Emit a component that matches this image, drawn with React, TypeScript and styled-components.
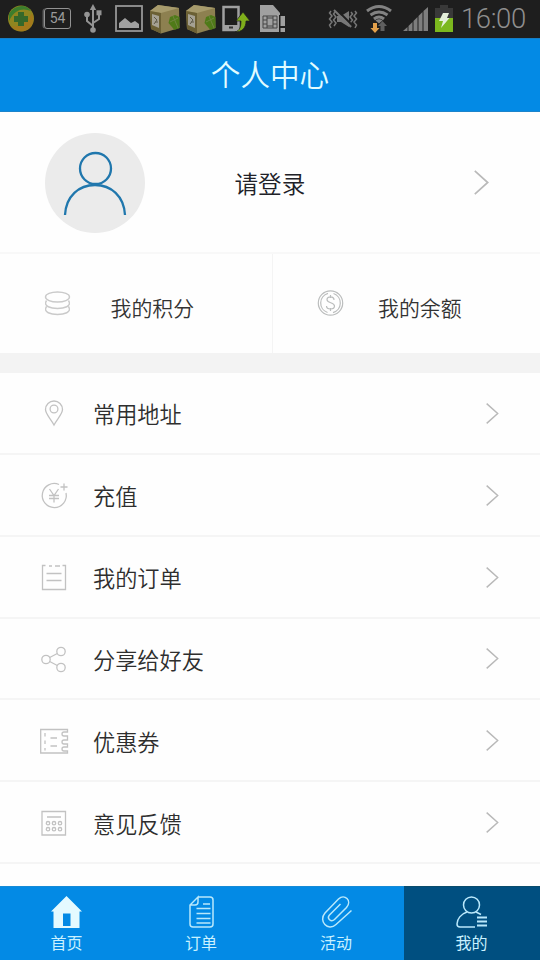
import React from 'react';
import styled, { createGlobalStyle } from 'styled-components';

const GlobalStyle = createGlobalStyle`
  * { box-sizing: border-box; }
  body { margin: 0; background: #fefefe; font-family: "Noto Sans CJK SC", sans-serif; }
  svg { display: block; overflow: visible; flex: none; }
`;

const Screen = styled.div`
  width: 540px;
  height: 960px;
  display: flex;
  flex-direction: column;
  background: #fefefe;
  overflow: hidden;
`;

const StatusBar = styled.div`
  height: 38px;
  flex: none;
  background: #1e1e1e;
  display: flex;
  align-items: center;
  justify-content: space-between;
  padding: 0 13px 1px 8px;
`;

const StatusGroup = styled.div`
  display: flex;
  align-items: center;
`;

const StatusItem = styled.div<{ $gap: number }>`
  margin-left: ${(p) => p.$gap}px;
`;

const BatteryLevel = styled.div`
  width: 27px;
  height: 21px;
  border: 1.5px solid #929292;
  border-radius: 3px;
  box-shadow: -2px 0 0 -0.5px #5a5a5a;
  color: #9a9a9a;
  font: 14px/19px Roboto, sans-serif;
  text-align: center;
`;

const Clock = styled.div`
  margin-left: 8px;
  width: 66px;
  color: #8f8f8f;
  font: 350 27.5px/34px Roboto, sans-serif;
  letter-spacing: -0.4px;
  white-space: nowrap;
`;

const TitleBar = styled.header`
  height: 74px;
  flex: none;
  display: flex;
  align-items: center;
  justify-content: center;
  padding-bottom: 2px;
  background: #038ae5;
  border-top: 1px solid #167dc4;
  border-bottom: 1px solid #1c84cb;
`;

const Title = styled.h1`
  margin: 0;
  color: #e2fcff;
  font-size: 29.6px;
  line-height: 44px;
  font-weight: 350;
`;

const Profile = styled.section`
  height: 142px;
  flex: none;
  display: flex;
  align-items: center;
  padding: 1px 51px 0 45px;
  border-bottom: 2px solid #f8f8f8;
`;

const Avatar = styled.div`
  width: 100px;
  height: 100px;
  border-radius: 50%;
  background: #ebebeb;
`;

const LoginText = styled.div`
  flex: 1;
  margin-left: 89.5px;
  color: #202127;
  font-size: 23.6px;
  line-height: 36px;
  font-weight: 350;
`;

const Stats = styled.section`
  height: 99px;
  flex: none;
  display: grid;
  grid-template-columns: 273px 1fr;
`;

const Stat = styled.div<{ $left: number; $gap: number; $divided?: boolean }>`
  display: flex;
  align-items: center;
  gap: ${(p) => p.$gap}px;
  padding-left: ${(p) => p.$left}px;
  padding-bottom: 2px;
  border-right: ${(p) => (p.$divided ? '1px solid #f4f4f4' : '0')};
`;

const StatLabel = styled.span`
  padding-top: 8px;
  color: #333;
  font-size: 20.9px;
  line-height: 32px;
  font-weight: 350;
`;

const Spacer = styled.div`
  height: 20px;
  flex: none;
  background: #f3f3f3;
`;

const Menu = styled.ul`
  margin: 0;
  padding: 0;
  height: 491px;
  flex: none;
  display: grid;
  grid-template-rows: repeat(6, 1fr);
  list-style: none;
`;

const MenuItem = styled.li`
  display: flex;
  align-items: center;
  padding: 1px 41px 0 40px;
  border-bottom: 2px solid #f5f5f5;
`;

const MenuLabel = styled.span`
  flex: 1;
  margin-left: 25px;
  color: #2e2e2e;
  font-size: 22.2px;
  line-height: 34px;
  font-weight: 350;
`;

const TabBar = styled.nav`
  height: 74px;
  flex: none;
  margin-top: auto;
  display: grid;
  grid-template-columns: 134px 135px 135px 136px;
  background: #038ae5;
`;

const Tab = styled.div<{ $active?: boolean }>`
  display: flex;
  flex-direction: column;
  align-items: center;
  padding: 9px 1px 0 0;
  background: ${(p) => (p.$active ? '#004f80' : 'transparent')};
  border-top: 1px solid ${(p) => (p.$active ? '#0a4c6c' : '#168bd6')};
`;

const TabLabel = styled.span`
  margin-top: 2px;
  color: #c9f1ff;
  font-size: 16px;
  line-height: 24px;
`;

const Chevron = ({ size }: { size: number }) => (
  <svg width={size * 0.55} height={size} viewBox="0 0 13.2 24" fill="none" stroke="#b9b9b9" strokeWidth="1.5">
    <path d="M0.7 1.700 12.200 12 0.7 22.300" />
  </svg>
);

const SafetyBadge = () => (
  <svg width="26" height="27" viewBox="0 0 26 27">
    <circle cx="13" cy="13.5" r="13" fill="#8f8620" />
    <path d="M1 9C6 0 18-2 23 6C15 3 7 4 1 16Z" fill="#3c7d2c" />
    <path d="M3 21C11 23 20 17 24 8C30 25 12 32 3 21Z" fill="#a3791b" />
    <path d="M10 7h6v4h4v6h-4v4h-6v-4H6v-6h4Z" fill="#35682a" />
  </svg>
);

const UsbIcon = () => (
  <svg width="18" height="29" viewBox="0 0 18 29" fill="none" stroke="#949494" strokeWidth="2">
    <path d="M9 4v22M9 22 3 17v-6M9 19l6-4V9" />
    <path d="m9 0 3.2 6H5.8Z" fill="#949494" stroke="none" />
    <circle cx="9" cy="26" r="2.8" fill="#949494" stroke="none" />
    <circle cx="3" cy="10.5" r="2.8" fill="#949494" stroke="none" />
    <path d="M12.5 6.3h5v5h-5Z" fill="#949494" stroke="none" />
  </svg>
);

const PictureIcon = () => (
  <svg width="28" height="27" viewBox="0 0 28 27">
    <rect x="1" y="1" width="26" height="25" fill="none" stroke="#969696" strokeWidth="1.8" />
    <path d="M4 23v-5l6-5 6 5 4-2 4 3v4Z" fill="#a0a0a0" />
  </svg>
);

const PackageIcon = () => (
  <svg width="30" height="30" viewBox="0 0 30 30">
    <path d="m0 7 8-6 21 3 .5 20L11 29.500 1 25Z" fill="#8d8050" />
    <path d="m0 7 8-6 21 3-18 5Z" fill="#a79b6c" />
    <path d="m0 7 11 2v20.500L1 25Z" fill="#6b6034" />
    <path d="m2 10 7 2v12l-7-3Z" fill="#a5a193" />
    <path d="m4 13 3 3-3 4m1-2h3" fill="none" stroke="#5c5847" />
    <path d="m20 13 5-2 4.500 2v11l-5 2-6-7Z" fill="#4f7a18" />
    <path d="m23 12 5 12m-8-6 8-4" stroke="#6f8540" />
  </svg>
);

const PhoneTransferIcon = () => (
  <svg width="28" height="28" viewBox="0 0 28 28">
    <path d="M1.5 2h15v23h-15Z" fill="none" stroke="#a0a0a0" strokeWidth="2.5" />
    <path d="M1 20h16v5H1Z" fill="#a0a0a0" />
    <path d="M7 22.500h4" stroke="#333" strokeWidth="2" />
    <path d="M13 27c5-1 6-6 6-11h-5l7-9 7 9h-4c0 7-4 11-11 11Z" fill="#7fae1b" stroke="#1e1e1e" strokeWidth=".7" />
  </svg>
);

const SimIcon = () => (
  <svg width="27" height="29" viewBox="0 0 27 29">
    <path d="M1 1h13l7 8v19H1Z" fill="#a0a0a0" />
    <path d="M4 12h14v12H4ZM8 12v12m6-12v12M4 16h4m6 0h4M4 20h4m6 0h4M8 14h6m-6 8h6" fill="none" stroke="#444" strokeWidth="1" />
    <path d="M20 11h6v18h-6Z" fill="#1e1e1e" />
    <path d="M21.5 12H26v10h-4.5Zm0 12H26v4h-4.5Z" fill="#a0a0a0" />
  </svg>
);

const VibrateIcon = () => (
  <svg width="28" height="20" viewBox="0 0 28 20" fill="none" stroke="#777" strokeWidth="1.5">
    <path d="m2 2-1.5 2L3 7 .5 10 3 13 .5 16 2 19M6 3 4.5 5 7 8l-2.5 3L7 14l-2 3M26 2l1.5 2L25 7l2.5 3-2.5 3 2.5 3-1.5 3M22 3l1.5 2L21 8l2.5 3-2.5 3 2 3" />
    <path d="M8 7h4l8-5v16l-8-5H8Z" fill="#777" stroke="none" />
    <path d="m7 0 17 17" stroke="#1e1e1e" strokeWidth="2" />
    <path d="m5 1 17 17" strokeWidth="2" />
  </svg>
);

const WifiIcon = () => (
  <svg width="26" height="28" viewBox="0 0 26 28" fill="none" stroke="#828282" strokeWidth="3">
    <path d="M1 6Q13-3 25 6M4.5 10Q13 4 21.5 10M8 14q5-4 10 0" />
    <path d="m9.500 15.500 3.500 3 3.500-3q-3.500-2.500-7 0Z" fill="#828282" stroke="none" />
    <path d="M7 18h4v5h2.500L9 28l-4.500-5H7Z" fill="#e3a04b" stroke="none" />
    <path d="M14.500 26v-5H12l4.500-5 4.500 5h-2.500v5Z" fill="#606060" stroke="none" />
  </svg>
);

const SignalIcon = () => (
  <svg width="25" height="24" viewBox="0 0 25 24" fill="#7e7e7e">
    <path d="m0 24 4.500-4v4Zm5.500 0v-5L9.500 15v9Zm5 0V14l4-4v14Zm5 0V9l4-4v19Zm5 0V4L25 0v24Z" />
  </svg>
);

const ChargeIcon = () => (
  <svg width="18" height="27" viewBox="0 0 18 27">
    <path d="M5 0h8v3h5v10H0V3h5Z" fill="#393939" />
    <path d="M0 13h18v14H0Z" fill="#7cb81e" />
    <path d="M8 8h6l-2 5h2.500L6 23l2-7H4Z" fill="#e4efda" />
  </svg>
);

const PersonIcon = () => (
  <svg width="100" height="100" viewBox="0 0 100 100" fill="none" stroke="#2077ad" strokeWidth="2.3">
    <circle cx="50.500" cy="35.500" r="15.500" />
    <path d="M20 82C21 63 34 52 50 52S79 63 80 82" />
  </svg>
);

const CoinsIcon = () => (
  <svg width="26" height="24" viewBox="0 0 26 24" fill="none" stroke="#cacaca" strokeWidth="1.4">
    <ellipse cx="13.500" cy="6" rx="12" ry="5" />
    <path d="M2.500 9.500c-4 6 5 8 11 8s15-2 11-8M2.500 15.500c-4 6 5 8 11 8s15-2 11-8" />
  </svg>
);

const DollarIcon = () => (
  <svg width="26" height="26" viewBox="0 0 26 26" fill="none" stroke="#bbbdbd" strokeWidth="1.2">
    <circle cx="12.500" cy="13" r="12.200" />
    <path d="M10 3.400A10 10 0 0 0 9.500 22.500M15 22.600A10 10 0 0 0 15.500 3.500" />
    <path d="M16 10c0-4-7-4-7-.5 0 4 7.500 2.500 7.500 6.500 0 4-8 4-8 0M12.500 5v3m0 10v3" />
  </svg>
);

const icons: Record<string, React.ReactNode> = {
  address: (
    <>
      <path d="M14 26C11 20 5.500 15 5.500 10.500a8.500 8.500 0 0 1 17 0C22.500 15 17 20 14 26Z" />
      <circle cx="14" cy="10" r="3.900" />
    </>
  ),
  recharge: (
    <path d="M19 3.500A12 12 0 1 0 26 12M20.500 6h7M24 2.500v7M9.500 8l4.500 6.500L18.500 8M14 14v7.500M9 14.500h10M9 17.500h10" />
  ),
  order: <path d="M5.500 2.500H2.500v24h23v-24h-3M9 3h3m3 0h5M6.500 10.500h15M6.500 17.500h15" />,
  share: (
    <>
      <circle cx="6" cy="14.500" r="4.200" />
      <circle cx="21" cy="6.500" r="4.200" />
      <circle cx="21" cy="22.500" r="4.200" />
      <path d="M9.700 12.500 17.300 8.500M9.700 16.500l7.600 4" />
    </>
  ),
  coupon: (
    <path d="M27.500 5V2.500H.7v23.500h26.800v-2h-3.500a2 2 0 0 1 0-4h3.500v-3h-3.500a2 2 0 0 1 0-4h3.500V9h-3.500a2 2 0 0 1 0-4ZM5 6v3.500m0 4V17m0 4v2.500M10.500 11H17M10.500 19H17" />
  ),
  feedback: (
    <>
      <path d="M2 2.500h23.500v23.500H2ZM7 8h14" />
      {[8, 14, 20].map((x) => (
        <React.Fragment key={x}>
          <circle cx={x} cy="14.200" r="1.700" />
          <circle cx={x} cy="20.200" r="1.700" />
        </React.Fragment>
      ))}
    </>
  ),
};

const LineIcon = ({ name }: { name: string }) => (
  <svg width="28" height="28" viewBox="0 0 28 28" fill="none" stroke="#c2c2c2" strokeWidth="1.3">
    {icons[name]}
  </svg>
);

const menu = [
  { icon: 'address', label: '常用地址' },
  { icon: 'recharge', label: '充值' },
  { icon: 'order', label: '我的订单' },
  { icon: 'share', label: '分享给好友' },
  { icon: 'coupon', label: '优惠券' },
  { icon: 'feedback', label: '意见反馈' },
];

const tabs = [
  {
    label: '首页',
    icon: (
      <path
        d="M15.500 0 31 15.500h-2.500V32h-26V15.500H0ZM12 17.500v12.500h7.500V17.500Z"
        fill="#e4faff"
        fillRule="evenodd"
        stroke="none"
      />
    ),
  },
  {
    label: '订单',
    icon: (
      <path d="M12 1h12q3 0 3 3v24q0 3-3 3H7q-3 0-3-3V9l8-8v5q0 3-3 3H4M17 8H24M10.500 12.500h14M10.500 17.500h14M10.500 22.500h14M10.500 27h14" />
    ),
  },
  {
    label: '活动',
    icon: (
      <path d="M19.500 8 8.500 19c-3 3.500 1.500 7.500 5 4.500L25.500 11.500c6-7-2-14-8-8.500L4 17C-3 25 7 36 15 28.500L30.500 14.500" />
    ),
  },
  {
    label: '我的',
    active: true,
    icon: (
      <>
        <circle cx="15.500" cy="9" r="8" />
        <path d="M11 16C5 18 1 23 1 28q0 3 3 3h15M20 16l5 2.500" />
        <path d="M21 21.500h10M21 25.500h10M21 29.500h10" strokeWidth="1.800" />
      </>
    ),
  },
];

export default function App() {
  return (
    <Screen>
      <GlobalStyle />
      <StatusBar>
        <StatusGroup>
          <StatusItem $gap={0}><SafetyBadge /></StatusItem>
          <StatusItem $gap={10}><BatteryLevel>54</BatteryLevel></StatusItem>
          <StatusItem $gap={13}><UsbIcon /></StatusItem>
          <StatusItem $gap={13}><PictureIcon /></StatusItem>
          <StatusItem $gap={7}><PackageIcon /></StatusItem>
          <StatusItem $gap={6}><PackageIcon /></StatusItem>
          <StatusItem $gap={6}><PhoneTransferIcon /></StatusItem>
          <StatusItem $gap={9}><SimIcon /></StatusItem>
        </StatusGroup>
        <StatusGroup>
          <VibrateIcon />
          <StatusItem $gap={9}><WifiIcon /></StatusItem>
          <StatusItem $gap={11}><SignalIcon /></StatusItem>
          <StatusItem $gap={7}><ChargeIcon /></StatusItem>
          <Clock>16:00</Clock>
        </StatusGroup>
      </StatusBar>
      <TitleBar><Title>个人中心</Title></TitleBar>
      <Profile>
        <Avatar><PersonIcon /></Avatar>
        <LoginText>请登录</LoginText>
        <Chevron size={27} />
      </Profile>
      <Stats>
        <Stat $left={44} $gap={40.5} $divided><CoinsIcon /><StatLabel>我的积分</StatLabel></Stat>
        <Stat $left={45} $gap={34}><DollarIcon /><StatLabel>我的余额</StatLabel></Stat>
      </Stats>
      <Spacer />
      <Menu>
        {menu.map((m) => (
          <MenuItem key={m.icon}>
            <LineIcon name={m.icon} />
            <MenuLabel>{m.label}</MenuLabel>
            <Chevron size={23} />
          </MenuItem>
        ))}
      </Menu>
      <TabBar>
        {tabs.map((t) => (
          <Tab key={t.label} $active={t.active}>
            <svg width="31" height="32" viewBox="0 0 31 32" fill="none" stroke="#b9e8fb" strokeWidth="1.500">
              {t.icon}
            </svg>
            <TabLabel>{t.label}</TabLabel>
          </Tab>
        ))}
      </TabBar>
    </Screen>
  );
}
